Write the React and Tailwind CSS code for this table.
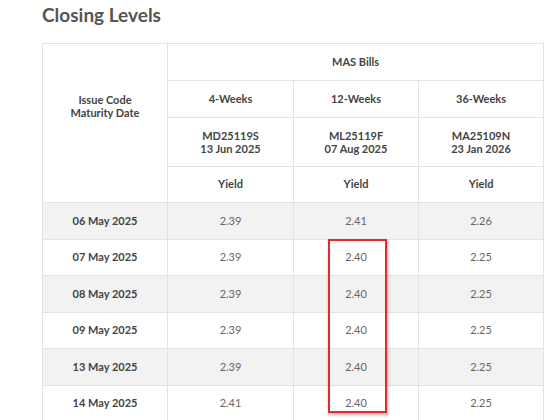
import React from "react";

const rows = [
  { date: "06 May 2025", vals: ["2.39", "2.41", "2.26"] },
  { date: "07 May 2025", vals: ["2.39", "2.40", "2.25"] },
  { date: "08 May 2025", vals: ["2.39", "2.40", "2.25"] },
  { date: "09 May 2025", vals: ["2.39", "2.40", "2.25"] },
  { date: "13 May 2025", vals: ["2.39", "2.40", "2.25"] },
  { date: "14 May 2025", vals: ["2.41", "2.40", "2.25"] },
];

const bills = [
  { term: "4-Weeks", code: "MD25119S", maturity: "13 Jun 2025" },
  { term: "12-Weeks", code: "ML25119F", maturity: "07 Aug 2025" },
  { term: "36-Weeks", code: "MA25109N", maturity: "23 Jan 2026" },
];

const cell = "border border-[#e3e3e3] text-center align-middle";

export default function App() {
  return (
    <div className="w-[560px] h-[420px] overflow-hidden bg-white font-['Lato','Liberation_Sans',sans-serif]">
      <h2 className="pl-[42px] pt-[3px] text-[19px] leading-[24px] font-bold text-[#555]">
        Closing Levels
      </h2>

      {/* Table with highlight box over the 12-week column */}
      <div className="relative ml-[42px] mt-[16px] w-[501px]">
        <table className="w-[501px] table-fixed border-collapse text-[11px]">
          <colgroup>
            <col className="w-[125px]" />
            <col className="w-[126px]" />
            <col className="w-[125px]" />
            <col className="w-[125px]" />
          </colgroup>
          <thead className="text-[#444] font-bold">
            <tr className="h-[37px]">
              <th className={`${cell} !align-top pt-[49px] leading-[13px]`} rowSpan={4}>
                Issue Code
                <br />
                Maturity Date
              </th>
              <th className={cell} colSpan={3}>
                MAS Bills
              </th>
            </tr>
            <tr className="h-[37px]">
              {bills.map((b) => (
                <th key={b.term} className={cell}>
                  {b.term}
                </th>
              ))}
            </tr>
            <tr className="h-[49px]">
              {bills.map((b) => (
                <th key={b.code} className={`${cell} leading-[13px]`}>
                  {b.code}
                  <br />
                  {b.maturity}
                </th>
              ))}
            </tr>
            <tr className="h-[36px]">
              {bills.map((b) => (
                <th key={b.code + "y"} className={cell}>
                  Yield
                </th>
              ))}
            </tr>
          </thead>
          <tbody>
            {rows.map((r, i) => (
              <tr
                key={r.date}
                className={`h-[36.5px] ${i % 2 === 0 ? "bg-[#f2f2f2]" : "bg-white"}`}
              >
                <td className={`${cell} font-bold text-[#444]`}>{r.date}</td>
                {r.vals.map((v, j) => (
                  <td key={j} className={`${cell} text-[#666]`}>
                    {v}
                  </td>
                ))}
              </tr>
            ))}
          </tbody>
        </table>

        <div className="absolute left-[286px] top-[196px] w-[59px] h-[174px] border-2 border-[#e32b2b] shadow-[1px_2px_3px_rgba(0,0,0,0.3)] pointer-events-none" />
      </div>
    </div>
  );
}
